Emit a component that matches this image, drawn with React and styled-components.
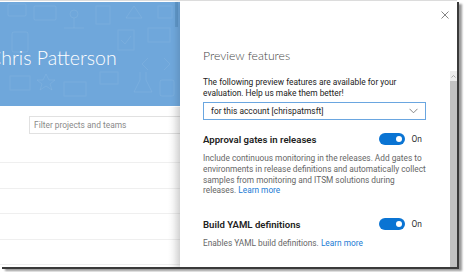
import React from 'react';
import styled, { createGlobalStyle } from 'styled-components';

const Global = createGlobalStyle`
  html, body {
    margin: 0;
    padding: 0;
    background: #fff;
  }
  body {
    font-family: Roboto, "Noto Sans", sans-serif;
  }
`;

const Page = styled.div`
  width: 464px;
  height: 272px;
  background: #fff;
  overflow: hidden;
`;

const Frame = styled.div`
  width: 457px;
  height: 267px;
  display: flex;
  overflow: hidden;
  border-top: 1px solid #dcdcdc;
  box-sizing: border-box;
  box-shadow: 2px 2px 0 #3a3a3a, 5px 4px 2px #9a9a9a;
`;

const Behind = styled.div`
  width: 180px;
  flex: none;
  display: flex;
  flex-direction: column;
  overflow: hidden;
  position: relative;
  background: #fff;
`;

const Banner = styled.div`
  flex: none;
  height: 104px;
  margin-top: 1px;
  background: #6fa7db;
  display: flex;
  align-items: center;
  overflow: hidden;
  position: relative;
`;

const Pattern = styled.svg`
  position: absolute;
  left: 0;
  top: 0;
`;

const BannerScroll = styled.div`
  position: absolute;
  right: 2px;
  top: 0;
  width: 3px;
  height: 25px;
  background: #5f97c9;
`;

const Name = styled.div`
  margin-left: -12px;
  margin-top: 6px;
  font-family: "Segoe UI", Lato, sans-serif;
  font-weight: 300;
  font-size: 19.5px;
  color: #fff;
  white-space: nowrap;
  position: relative;
`;

const Filter = styled.div`
  flex: none;
  margin: 10px 0 0 29px;
  height: 18px;
  width: 170px;
  border: 1px solid #e1e1e1;
  box-sizing: border-box;
  display: flex;
  align-items: center;
  padding-left: 4px;
  font-size: 8.4px;
  color: #8a8a8a;
  white-space: nowrap;
`;

const Rows = styled.div`
  flex: none;
  margin-top: 28px;
  display: flex;
  flex-direction: column;
`;

const Row = styled.div`
  height: 25.5px;
  border-top: 1px solid #efefef;
  box-sizing: border-box;
`;

const Fade = styled.div`
  position: absolute;
  right: 0;
  top: 106px;
  bottom: 0;
  width: 12px;
  background: linear-gradient(to right, rgba(0, 0, 0, 0), rgba(0, 0, 0, 0.08));
`;

const Panel = styled.div`
  flex: 1;
  display: flex;
  background: #fff;
  box-shadow: -3px 0 6px rgba(0, 0, 0, 0.12);
  position: relative;
`;

const Content = styled.div`
  flex: 1;
  padding: 0 0 0 23px;
  display: flex;
  flex-direction: column;
  color: #333;
`;

const CloseRow = styled.div`
  display: flex;
  justify-content: flex-end;
  padding: 10px 1px 0 0;
  height: 8px;
`;

const Title = styled.div`
  margin-top: 29px;
  font-family: "Segoe UI", Lato, sans-serif;
  font-weight: 300;
  font-size: 12.2px;
  color: #444;
`;

const Intro = styled.div`
  margin-top: 14px;
  font-size: 8.4px;
  line-height: 10.6px;
  color: #222;
  width: 215px;
`;

const Select = styled.div`
  margin-top: 4px;
  width: 223px;
  height: 18px;
  box-sizing: border-box;
  border: 1px solid #6aa6e0;
  display: flex;
  align-items: center;
  justify-content: space-between;
  padding: 0 7px;
  font-size: 8.4px;
  color: #222;
`;

const Feature = styled.div`
  margin-top: ${({ $gap }) => $gap}px;
  display: flex;
  flex-direction: column;
`;

const FeatureHead = styled.div`
  display: flex;
  align-items: center;
  width: 219px;
  justify-content: space-between;
`;

const FeatureName = styled.div`
  font-size: 9.6px;
  font-weight: 600;
  color: #222;
`;

const ToggleWrap = styled.div`
  display: flex;
  align-items: center;
  gap: 7px;
  font-size: 8.4px;
  color: #333;
`;

const Track = styled.div`
  width: 26px;
  height: 12px;
  border-radius: 6px;
  background: #0a74d3;
  display: flex;
  align-items: center;
  justify-content: flex-end;
  padding-right: 3px;
  box-sizing: border-box;
`;

const Knob = styled.div`
  width: 6px;
  height: 6px;
  border-radius: 50%;
  background: #fff;
`;

const Desc = styled.div`
  margin-top: 8px;
  font-size: 8.3px;
  line-height: 10.7px;
  color: #666;
  width: 226px;
`;

const Link = styled.a`
  color: #1a7ad4;
  text-decoration: none;
`;

const ScrollBar = styled.div`
  width: 7px;
  margin-top: 70px;
  display: flex;
  flex-direction: column;
`;

const ScrollArrow = styled.div`
  height: 10px;
  background: #ececec;
  display: flex;
  align-items: center;
  justify-content: center;
`;

const Thumb = styled.div`
  flex: 1;
  background: #c2c2c2;
`;

const Toggle = () => (
  <ToggleWrap>
    <Track><Knob /></Track>
    On
  </ToggleWrap>
);

const BannerPattern = () => (
  <Pattern width="180" height="104" viewBox="0 0 180 104" fill="none" stroke="rgba(255,255,255,0.07)" strokeWidth="1">
    <rect x="8" y="2" width="18" height="12" rx="1" />
    <rect x="34" y="4" width="22" height="14" rx="1" />
    <circle cx="74" cy="12" r="4" />
    <path d="M74 16V26M64 26H84" />
    <rect x="96" y="4" width="14" height="18" />
    <path d="M134 4L142 16H126Z" />
    <rect x="158" y="4" width="14" height="12" />
    <rect x="12" y="30" width="16" height="20" rx="2" />
    <rect x="118" y="28" width="16" height="20" />
    <path d="M121 38L125 42L131 34" />
    <rect x="148" y="26" width="22" height="14" />
    <path d="M148 56L142 62L148 68M164 56L170 62L164 68" />
    <rect x="10" y="74" width="20" height="14" />
    <path d="M46 72L49 78L55 78L50 82L52 88L46 84L40 88L42 82L37 78L43 78Z" />
    <rect x="64" y="80" width="22" height="14" />
    <rect x="100" y="70" width="18" height="12" />
    <path d="M140 70V78L134 90H152L146 78V70" />
    <rect x="160" y="78" width="14" height="16" rx="2" />
  </Pattern>
);

export default function App() {
  return (
    <Page>
      <Global />
      <Frame>
        <Behind>
          <Banner>
            <BannerPattern />
            <Name>Chris Patterson</Name>
            <BannerScroll />
          </Banner>
          <Filter>Filter projects and teams</Filter>
          <Rows>
            <Row /><Row /><Row /><Row /><Row />
          </Rows>
          <Fade />
        </Behind>
        <Panel>
          <Content>
            <CloseRow>
              <svg width="8" height="8" viewBox="0 0 8 8">
                <path d="M0.5 0.5L7.5 7.5M7.5 0.5L0.5 7.5" stroke="#777" strokeWidth="0.9" fill="none" />
              </svg>
            </CloseRow>
            <Title>Preview features</Title>
            <Intro>
              The following preview features are available for your evaluation. Help us make them better!
            </Intro>
            <Select>
              <span>for this account [chrispatmsft]</span>
              <svg width="9" height="6" viewBox="0 0 9 6">
                <path d="M0.5 0.8L4.5 4.8L8.5 0.8" stroke="#777" strokeWidth="0.9" fill="none" />
              </svg>
            </Select>
            <Feature $gap={13}>
              <FeatureHead>
                <FeatureName>Approval gates in releases</FeatureName>
                <Toggle />
              </FeatureHead>
              <Desc>
                Include continuous monitoring in the releases. Add gates to environments in release definitions and automatically collect samples from monitoring and ITSM solutions during releases. <Link>Learn more</Link>
              </Desc>
            </Feature>
            <Feature $gap={22}>
              <FeatureHead>
                <FeatureName>Build YAML definitions</FeatureName>
                <Toggle />
              </FeatureHead>
              <Desc>
                Enables YAML build definitions. <Link>Learn more</Link>
              </Desc>
            </Feature>
          </Content>
          <ScrollBar>
            <ScrollArrow>
              <svg width="5" height="3" viewBox="0 0 5 3">
                <path d="M0.5 2.5L2.5 0.5L4.5 2.5" stroke="#999" strokeWidth="0.8" fill="none" />
              </svg>
            </ScrollArrow>
            <Thumb />
          </ScrollBar>
        </Panel>
      </Frame>
    </Page>
  );
}
